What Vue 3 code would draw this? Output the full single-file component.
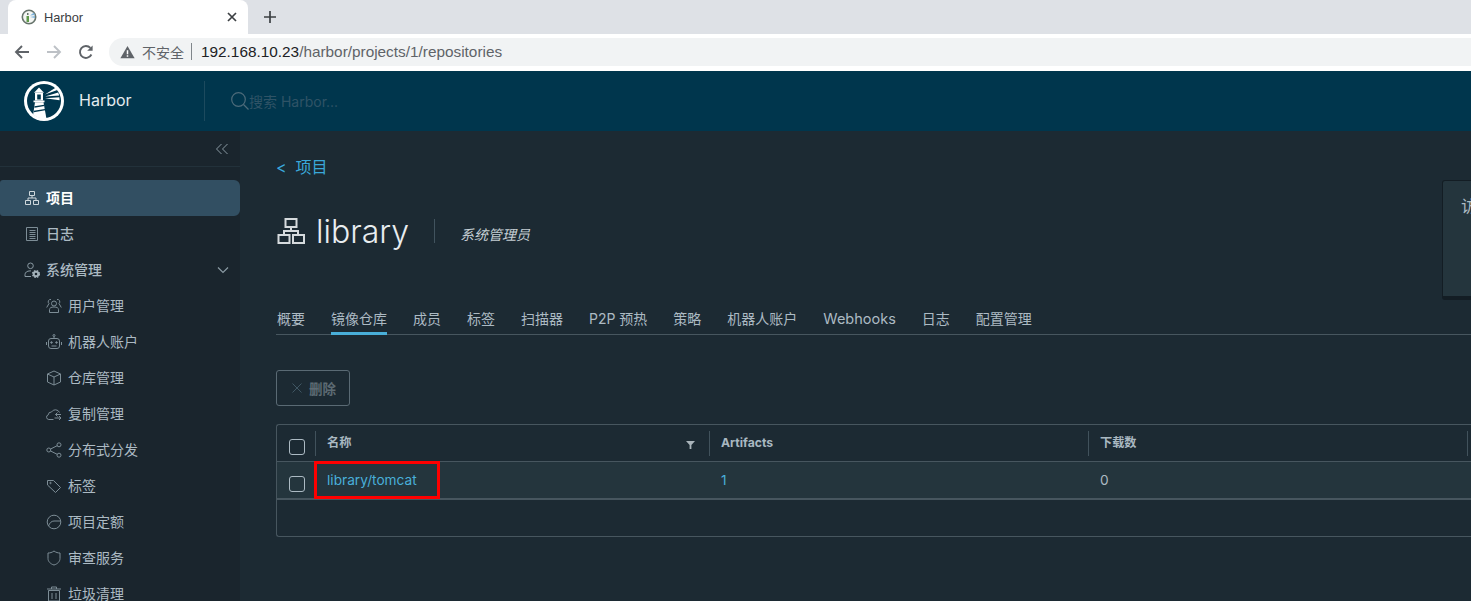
<script setup>
const sysItems = [
  { label: '用户管理', icon: 'users' },
  { label: '机器人账户', icon: 'robot' },
  { label: '仓库管理', icon: 'box' },
  { label: '复制管理', icon: 'cloud' },
  { label: '分布式分发', icon: 'share' },
  { label: '标签', icon: 'tag' },
  { label: '项目定额', icon: 'gauge' },
  { label: '审查服务', icon: 'shield' },
  { label: '垃圾清理', icon: 'trash' },
]
const tabs = [
  { text: '概要' }, { text: '镜像仓库', on: true }, { text: '成员' }, { text: '标签' }, { text: '扫描器' },
  { text: 'P2P 预热' }, { text: '策略' }, { text: '机器人账户' }, { text: 'Webhooks', latin: true }, { text: '日志' }, { text: '配置管理' },
]
</script>

<template>
  <div class="page">
    <div class="tabstrip">
      <div class="tab">
        <svg class="favicon" viewBox="0 0 16 16" width="16" height="16">
          <circle cx="8" cy="8" r="6.7" fill="#f4f6f3" stroke="#67746c" stroke-width="1.6" />
          <path d="M5.500 7h2.500v6H5.500z" fill="#5f9a4a" />
          <path d="M6 4h1.500v2H6z" fill="#67746c" />
          <path d="M9 6.500l4-3 .8 2.500zM9 8l5-1v2z" fill="#7fb4dc" />
        </svg>
        <span class="tab-title">Harbor</span>
        <svg class="tab-close" viewBox="0 0 10 10" width="10" height="10">
          <path d="M1 1l8 8M9 1l-8 8" stroke="#3c4043" stroke-width="1.7" />
        </svg>
      </div>
      <svg class="newtab" viewBox="0 0 12 12" width="12" height="12">
        <path d="M6 0v12M0 6h12" stroke="#3c4043" stroke-width="1.7" />
      </svg>
    </div>

    <div class="toolbar">
      <svg class="nav" viewBox="0 0 16 16" width="16" height="16">
        <path d="M15 8H2M8 2L2 8l6 6" fill="none" stroke="#5f6368" stroke-width="1.9" />
      </svg>
      <svg class="nav" viewBox="0 0 16 16" width="16" height="16">
        <path d="M1 8h13M8 2l6 6-6 6" fill="none" stroke="#bdc1c6" stroke-width="1.9" />
      </svg>
      <svg class="nav" viewBox="0 0 16 16" width="16" height="16">
        <path d="M13.400 10.500A6 6 0 1 1 12.400 3.900" fill="none" stroke="#5f6368" stroke-width="1.9" />
        <path d="M14.600 1.400v5.400H9.200z" fill="#5f6368" />
      </svg>
      <div class="omnibox">
        <svg viewBox="0 0 16 14" width="15" height="14">
          <path d="M8 0.500L15.600 13.600H0.400z" fill="#5f6368" />
          <path d="M7.200 5h1.600v4.500H7.200zM7.200 10.400h1.600V12H7.200z" fill="#fff" />
        </svg>
        <span class="insecure">不安全</span>
        <span class="omni-sep"></span>
        <span class="url"><b>192.168.10.23</b>/harbor/projects/1/repositories</span>
      </div>
    </div>

    <header class="appbar">
      <svg class="logo" viewBox="0 0 40 40" width="40" height="40">
        <defs>
          <clipPath id="logo-clip"><circle cx="20" cy="20" r="17.500" /></clipPath>
        </defs>
        <circle cx="20" cy="20" r="20" fill="#fff" />
        <circle cx="20" cy="20" r="17" fill="#00364d" />
        <g clip-path="url(#logo-clip)">
          <path d="M15 6.500l5 5.300H10z" fill="#fff" />
          <path d="M11 12h8v7.500h-8z" fill="#fff" />
          <path d="M13.200 13.600h3.600v5h-3.600z" fill="#00364d" />
          <path d="M9.500 19.500h11v1.700h-11z" fill="#fff" />
          <path d="M11 21.200h8.500L22.500 38H8.500z" fill="#fff" />
          <path d="M10.500 26l9.800-1.600M9.800 30.500l11.400-1.900" stroke="#00364d" stroke-width="1.300" />
        </g>
        <path d="M21 13.500l10.500-6.800 1.800 2.300zM21 15.400l13.200-3.800 1 2.800zM21 17.300l14.400-1 .2 3z" fill="#fff" />
      </svg>
      <span class="brand">Harbor</span>
      <span class="bar-sep"></span>
      <svg class="search" viewBox="0 0 20 20" width="20" height="20">
        <circle cx="8.500" cy="8.500" r="6.800" fill="none" stroke="#4d6b7a" stroke-width="1.200" />
        <path d="M13.500 13.500l5 5" stroke="#4d6b7a" stroke-width="1.200" />
      </svg>
      <span class="search-ph">搜索 Harbor...</span>
    </header>

    <div class="body">
      <aside class="sidebar">
        <div class="collapse">
          <svg viewBox="0 0 14 12" width="14" height="12">
            <path d="M6.500 1L1.500 6l5 5M12.500 1l-5 5 5 5" fill="none" stroke="#8a9aa3" stroke-width="1" />
          </svg>
        </div>
        <nav class="nav-list">
          <a class="item active">
            <svg class="ico" viewBox="0 0 16 16" width="16" height="16">
              <path d="M5.500 1.500h5v4h-5zM1.500 10.500h5v4h-5zM9.500 10.500h5v4h-5zM8 5.500V8M4 10.500V8h8v2.500" fill="none" stroke="#cfd8dc" />
            </svg>
            <span>项目</span>
          </a>
          <a class="item">
            <svg class="ico" viewBox="0 0 16 16" width="16" height="16">
              <path d="M2.500 1.500h11v13h-11z" fill="none" stroke="#7d8d96" />
              <path d="M5.500 4.500h6M5.500 6.500h6M5.500 8.500h6M5.500 10.500h6M5.500 12.500h6" stroke="#7d8d96" />
            </svg>
            <span>日志</span>
          </a>
          <a class="item">
            <svg class="ico" viewBox="0 0 16 16" width="16" height="16">
              <circle cx="6.500" cy="3.800" r="2.800" fill="none" stroke="#8a9aa3" />
              <path d="M1 14.500v-2c0-2 2-3.600 5-3.600h1M1 14.500h6" fill="none" stroke="#8a9aa3" />
              <circle cx="12" cy="12" r="2.300" fill="none" stroke="#a3b1b9" stroke-width="2" />
              <circle cx="12" cy="12" r="3.500" fill="none" stroke="#a3b1b9" stroke-width="1.200" stroke-dasharray="1.500 1.300" />
            </svg>
            <span>系统管理</span>
            <svg class="chev" viewBox="0 0 12 8" width="12" height="8">
              <path d="M1 1.500l5 5 5-5" fill="none" stroke="#8a9aa3" stroke-width="1.200" />
            </svg>
          </a>
          <a v-for="it in sysItems" :key="it.label" class="item sub">
            <svg class="ico" viewBox="0 0 16 16" width="16" height="16" fill="none" stroke="#7d8d96">
              <template v-if="it.icon === 'users'">
                <circle cx="8" cy="5.500" r="2.500" />
                <path d="M3.500 14.500v-3c0-1.500 1.500-2.500 4.500-2.500s4.500 1 4.500 2.500v3zM5 1.500a2.300 2.300 0 0 0-2 4L.7 9.500M11 1.500a2.300 2.300 0 0 1 2 4l2.300 4" />
              </template>
              <template v-else-if="it.icon === 'robot'">
                <rect x="2.500" y="4.500" width="11" height="10" rx="2.500" />
                <path d="M8 4.500V2.500M.5 8v3M15.500 8v3M5.500 12h5" />
                <circle cx="8" cy="1.500" r="1" />
                <circle cx="5.500" cy="8.500" r=".8" fill="#7d8d96" />
                <circle cx="10.500" cy="8.500" r=".8" fill="#7d8d96" />
              </template>
              <template v-else-if="it.icon === 'box'">
                <path d="M8 1l6.500 3v8L8 15l-6.500-3V4zM1.500 4L8 7l6.500-3M8 7v8" />
              </template>
              <template v-else-if="it.icon === 'cloud'">
                <path d="M7.500 13.500H2.800A2.400 2.400 0 0 1 2.300 8.800 3 3 0 0 1 5.500 6 4.500 4.500 0 0 1 13.500 6.500M15 8.500H9.500M11.500 6.500l-2 2 2 2M8.500 12H15M13 10l2 2-2 2" />
              </template>
              <template v-else-if="it.icon === 'share'">
                <circle cx="2.800" cy="8" r="2" />
                <circle cx="13" cy="2.800" r="2" />
                <circle cx="13" cy="13.200" r="2" />
                <path d="M4.600 7l6.600-3.300M4.600 9l6.600 3.300" />
              </template>
              <template v-else-if="it.icon === 'tag'">
                <path d="M1.500 2.500h6l7 7-5 5-8-7.500z" />
                <circle cx="4.500" cy="5" r=".7" />
              </template>
              <template v-else-if="it.icon === 'gauge'">
                <circle cx="8" cy="8" r="6.800" />
                <path d="M2.500 12c1-3 3-5 5.500-5h6.500" />
              </template>
              <template v-else-if="it.icon === 'shield'">
                <path d="M8 1c2 1.500 4 2 6 2v5.500c0 3-2.500 5.500-6 6.500-3.500-1-6-3.500-6-6.500V3c2 0 4-.5 6-2z" />
              </template>
              <template v-else>
                <path d="M2.500 4.500h11V15h-11zM1 3h14M5.500 3V1h5v2M6 7v6M10 7v6" />
              </template>
            </svg>
            <span>{{ it.label }}</span>
          </a>
        </nav>
      </aside>

      <main class="content">
        <a class="back"><span class="lt">&lt;</span>项目</a>
        <div class="title-row">
          <svg class="title-ico" viewBox="0 0 28 28" width="28" height="28">
            <path d="M8.500 2h11v8h-11zM1.500 18h11v8h-11zM16 18h11v8H16zM14 10v4M7 18v-4h14v4" fill="none" stroke="#d5dadd" stroke-width="2" />
          </svg>
          <h1>library</h1>
          <span class="title-sep"></span>
          <em>系统管理员</em>
        </div>
        <div class="tabs">
          <a v-for="t in tabs" :key="t.text" class="ptab" :class="{ on: t.on, latin: t.latin }">{{ t.text }}</a>
        </div>
        <button class="del">
          <svg viewBox="0 0 10 10" width="10" height="10">
            <path d="M.5.500l9 9M9.500.500l-9 9" stroke="#3f5663" />
          </svg>
          删除
        </button>
        <div class="grid">
          <div class="row head">
            <div class="cell check"><span class="box"></span></div>
            <div class="cell name">
              <span class="rule"></span>
              名称
              <svg class="filter" viewBox="0 0 10 10" width="9" height="9">
                <path d="M0 1h10L6 5.500V10H4V5.500z" fill="#a9b4ba" />
              </svg>
            </div>
            <div class="cell arts"><span class="rule"></span>Artifacts</div>
            <div class="cell pulls"><span class="rule"></span>下载数</div>
            <div class="cell rest"><span class="rule"></span></div>
          </div>
          <div class="row data">
            <div class="cell check"><span class="box"></span></div>
            <div class="cell name"><a class="link">library/tomcat</a></div>
            <div class="cell arts blue">1</div>
            <div class="cell pulls">0</div>
            <div class="cell rest"></div>
            <span class="highlight"></span>
          </div>
          <div class="empty"></div>
        </div>
        <div class="popcard"><span>访</span></div>
      </main>
    </div>
  </div>
</template>

<style>
html, body { margin: 0; overflow: hidden; background: #1c2a33; }
</style>

<style scoped>
.page {
  width: 1471px;
  height: 601px;
  overflow: hidden;
  display: flex;
  flex-direction: column;
  font-family: "Inter", "Noto Sans CJK SC", sans-serif;
}
.tabstrip {
  height: 34px;
  flex: none;
  background: #dee1e6;
  display: flex;
  align-items: flex-end;
  padding-left: 8px;
  box-sizing: border-box;
}
.tab {
  width: 240px;
  height: 34px;
  background: #fff;
  border-radius: 8px 8px 0 0;
  display: flex;
  align-items: center;
  padding: 0 11px 0 13px;
  box-sizing: border-box;
}
.favicon { flex: none; }
.tab-title {
  margin-left: 7px;
  font: 12.800px "Liberation Sans", sans-serif;
  color: #3c4043;
  flex: 1;
}
.newtab { margin: 0 0 11px 16px; }
.toolbar {
  height: 37px;
  flex: none;
  background: #fff;
  display: flex;
  align-items: center;
  padding: 0 0 2px 14px;
  gap: 16px;
  box-sizing: border-box;
}
.nav { flex: none; }
.omnibox {
  flex: 1;
  height: 28px;
  margin-left: -1px;
  background: #f1f3f4;
  border-radius: 14px 0 0 14px;
  display: flex;
  align-items: center;
  padding-left: 11px;
}
.insecure {
  margin-left: 7px;
  font-size: 14px;
  color: #5f6368;
}
.omni-sep {
  width: 1px;
  height: 17px;
  margin: 0 9px 0 7px;
  background: #80868b;
}
.url {
  font: 15.350px "Liberation Sans", sans-serif;
  color: #5f6368;
}
.url b { font-weight: 400; color: #202124; }
.appbar {
  height: 60px;
  flex: none;
  background: #00364d;
  display: flex;
  align-items: center;
  padding-left: 24px;
  box-sizing: border-box;
}
.logo { flex: none; }
.brand {
  margin: -2px 0 0 15px;
  width: 125px;
  font-size: 16px;
  color: #e4ecef;
}
.bar-sep {
  width: 1px;
  height: 40px;
  background: #1c4a5e;
}
.search { margin-left: 25px; flex: none; }
.search-ph {
  margin-left: -1px;
  font-size: 14px;
  color: #2f5366;
}
.body {
  flex: 1;
  display: flex;
  min-height: 0;
}
.sidebar {
  width: 240px;
  flex: none;
  background: #1a252d;
  overflow: hidden;
}
.collapse {
  height: 36px;
  border-bottom: 1px solid #22313a;
  display: flex;
  justify-content: flex-end;
  align-items: center;
  padding-right: 11px;
  box-sizing: border-box;
}
.nav-list {
  padding-top: 13px;
  display: flex;
  flex-direction: column;
}
.item {
  height: 36px;
  flex: none;
  display: flex;
  align-items: center;
  padding-left: 24px;
  font-size: 14px;
  font-weight: 500;
  line-height: 34px;
  color: #acbac3;
  box-sizing: border-box;
  position: relative;
}
.item.active {
  background: #324f62;
  border-radius: 3px 6px 6px 3px;
  color: #fff;
  font-weight: 700;
}
.item .ico { margin-right: 6px; flex: none; }
.item.sub { padding-left: 46px; font-weight: 400; }
.chev { position: absolute; right: 11px; top: 14px; }
.content {
  flex: 1;
  min-width: 0;
  background: #1c2a33;
  padding: 27px 0 0 36px;
  position: relative;
  box-sizing: border-box;
}
.back {
  display: block;
  font-size: 16px;
  line-height: 18px;
  color: #3aa8da;
}
.lt { margin-right: 9px; }
.title-row {
  margin-top: 35px;
  height: 40px;
  display: flex;
  align-items: center;
  padding-left: 1px;
}
.title-ico { flex: none; }
h1 {
  margin: 2px 0 0 11px;
  font-size: 32px;
  font-weight: 300;
  line-height: 40px;
  color: #e8edf0;
}
.title-sep {
  width: 1px;
  height: 24px;
  margin: 0 25px;
  background: #41535e;
}
em {
  font-size: 14px;
  margin-top: 6px;
  color: #c5ced3;
}
.tabs {
  margin-top: 46px;
  height: 37px;
  display: flex;
  align-items: flex-start;
  gap: 26px;
  border-bottom: 1px solid #47565f;
  width: 1195px;
  padding-left: 1px;
  box-sizing: content-box;
}
.ptab {
  height: 38px;
  line-height: 44px;
  font-size: 14px;
  color: #acbac3;
  box-sizing: border-box;
}
.ptab.latin { font-size: 14.500px; }
.ptab.on {
  border-bottom: 3px solid #49afd9;
}
.del {
  display: flex;
  align-items: center;
  margin-top: 35px;
  width: 74px;
  height: 36px;
  padding: 0 0 1px 15px;
  gap: 7px;
  background: transparent;
  border: 1px solid #5a6a74;
  border-radius: 3px;
  font-family: inherit;
  font-size: 13.500px;
  font-weight: 700;
  color: #5d6b73;
  box-sizing: border-box;
}
.grid {
  margin-top: 18px;
  width: 1195px;
  height: 113px;
  border: 1px solid #47565f;
  border-right: 0;
  border-radius: 3px 0 0 3px;
  box-sizing: border-box;
}
.row {
  display: flex;
  position: relative;
}
.head {
  height: 36px;
  border-bottom: 1px solid #47565f;
  font-size: 12.200px;
  font-weight: 700;
  color: #a9b8c1;
}
.data {
  height: 36px;
  background: #24353d;
  border-bottom: 2px solid #47565f;
  font-size: 13.700px;
  color: #acbac3;
}
.cell {
  position: relative;
  display: flex;
  flex: none;
  align-items: center;
  box-sizing: border-box;
  padding-left: 12px;
}
.head .cell { padding-bottom: 2px; }
.check { width: 38px; padding: 8px 0 0 12px; }
.head .cell.check { padding: 8px 0 0 12px; }
.name { width: 394px; }
.arts { width: 379px; }
.pulls { width: 379px; }
.rest { width: 4px; padding-left: 0; }
.rule {
  position: absolute;
  left: 0;
  top: 6px;
  height: 25px;
  width: 1px;
  background: #41525c;
}
.box {
  width: 14px;
  height: 14px;
  border: 1px solid #acbac3;
  border-radius: 3px;
  display: block;
}
.filter { position: absolute; right: 14px; top: 15px; }
.link { color: #49afd9; }
.blue { color: #49afd9; }
.highlight {
  position: absolute;
  left: 37px;
  top: -1px;
  width: 126px;
  height: 38px;
  border: 3px solid #ff0000;
  box-sizing: border-box;
  pointer-events: none;
}
.empty { height: 37px; }
.popcard {
  position: absolute;
  left: 1202px;
  top: 49px;
  width: 60px;
  height: 120px;
  background: #24353d;
  border: 1px solid #131d24;
  border-bottom-width: 4px;
  border-radius: 3px;
  box-sizing: border-box;
  overflow: hidden;
  padding: 12px 0 0 18px;
  font-size: 16px;
  color: #acbac3;
}
</style>
